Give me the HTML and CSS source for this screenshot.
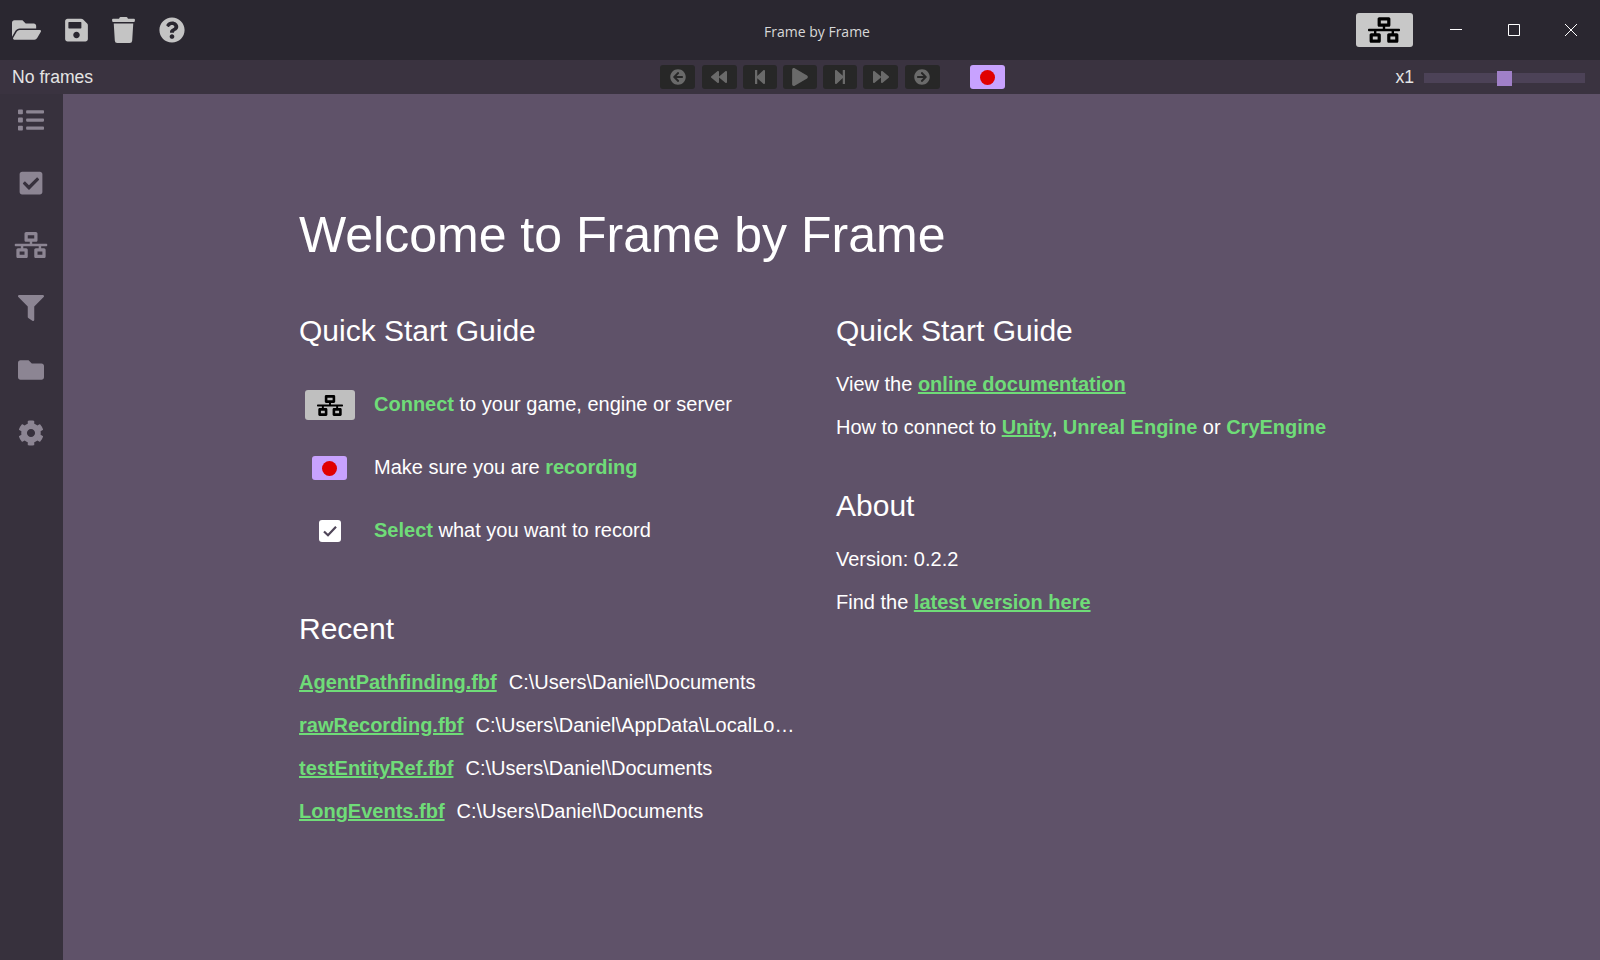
FILE: index.html
```html
<!DOCTYPE html>
<html>
  <head>
    <title>Frame by Frame</title>
    <meta charset="utf-8" />
    <link rel="stylesheet" href="styles.css">
  </head>
  <body>
    <svg class="defs" xmlns="http://www.w3.org/2000/svg">
      <symbol id="i-folder-open" viewBox="0 0 576 512"><path d="M572.694 292.093L500.27 416.248A63.997 63.997 0 0 1 444.989 448H45.025c-18.523 0-30.064-20.093-20.731-36.093l72.424-124.155A64 64 0 0 1 152 256h399.964c18.523 0 30.064 20.093 20.73 36.093zM152 224h328v-48c0-26.51-21.49-48-48-48H272l-64-64H48C21.49 64 0 85.49 0 112v278.046l69.077-118.418C86.214 242.25 117.989 224 152 224z"/></symbol>
      <symbol id="i-save" viewBox="0 0 448 512"><path d="M433.941 129.941l-83.882-83.882A48 48 0 0 0 316.118 32H48C21.49 32 0 53.49 0 80v352c0 26.51 21.49 48 48 48h352c26.51 0 48-21.49 48-48V163.882a48 48 0 0 0-14.059-33.941zM224 416c-35.346 0-64-28.654-64-64 0-35.346 28.654-64 64-64s64 28.654 64 64c0 35.346-28.654 64-64 64zm96-304.52V212c0 6.627-5.373 12-12 12H76c-6.627 0-12-5.373-12-12V108c0-6.627 5.373-12 12-12h228.52c3.183 0 6.235 1.264 8.485 3.515l3.48 3.48A11.996 11.996 0 0 1 320 111.48z"/></symbol>
      <symbol id="i-trash" viewBox="0 0 448 512"><path d="M432 32H312l-9.4-18.7A24 24 0 0 0 281.1 0H166.8a23.72 23.72 0 0 0-21.4 13.3L136 32H16A16 16 0 0 0 0 48v32a16 16 0 0 0 16 16h416a16 16 0 0 0 16-16V48a16 16 0 0 0-16-16zM53.2 467a48 48 0 0 0 47.9 45h245.8a48 48 0 0 0 47.9-45L416 128H32z"/></symbol>
      <symbol id="i-question" viewBox="0 0 512 512"><path d="M504 256c0 136.997-111.043 248-248 248S8 392.997 8 256C8 119.083 119.043 8 256 8s248 111.083 248 248zM262.655 90c-54.497 0-89.255 22.957-116.549 63.758-3.536 5.286-2.353 12.415 2.715 16.258l34.699 26.31c5.205 3.947 12.621 3.008 16.665-2.122 17.864-22.658 30.113-35.797 57.303-35.797 20.429 0 45.698 13.148 45.698 32.958 0 14.976-12.363 22.667-32.534 33.976C247.128 238.528 216 254.941 216 296v4c0 6.627 5.373 12 12 12h56c6.627 0 12-5.373 12-12v-1.333c0-28.462 83.186-29.647 83.186-106.667 0-58.002-60.165-102-116.531-102zM256 338c-25.365 0-46 20.635-46 46 0 25.364 20.635 46 46 46s46-20.636 46-46c0-25.365-20.635-46-46-46z"/></symbol>
      <symbol id="i-network" viewBox="0 0 640 512"><path d="M640 264v-16c0-8.84-7.16-16-16-16H344v-40h72c17.67 0 32-14.33 32-32V32c0-17.67-14.33-32-32-32H224c-17.67 0-32 14.33-32 32v128c0 17.67 14.33 32 32 32h72v40H16c-8.84 0-16 7.16-16 16v16c0 8.84 7.16 16 16 16h104v40H64c-17.67 0-32 14.33-32 32v128c0 17.67 14.33 32 32 32h160c17.67 0 32-14.33 32-32V352c0-17.67-14.33-32-32-32h-56v-40h304v40h-56c-17.67 0-32 14.33-32 32v128c0 17.67 14.33 32 32 32h160c17.67 0 32-14.33 32-32V352c0-17.67-14.33-32-32-32h-56v-40h104c8.84 0 16-7.16 16-16zM256 128V64h128v64H256zm-64 320H96v-64h96v64zm352 0h-96v-64h96v64z"/></symbol>
      <symbol id="i-list" viewBox="0 0 512 512"><path d="M80 368H16a16 16 0 0 0-16 16v64a16 16 0 0 0 16 16h64a16 16 0 0 0 16-16v-64a16 16 0 0 0-16-16zm0-320H16A16 16 0 0 0 0 64v64a16 16 0 0 0 16 16h64a16 16 0 0 0 16-16V64a16 16 0 0 0-16-16zm0 160H16a16 16 0 0 0-16 16v64a16 16 0 0 0 16 16h64a16 16 0 0 0 16-16v-64a16 16 0 0 0-16-16zm416 176H176a16 16 0 0 0-16 16v32a16 16 0 0 0 16 16h320a16 16 0 0 0 16-16v-32a16 16 0 0 0-16-16zm0-320H176a16 16 0 0 0-16 16v32a16 16 0 0 0 16 16h320a16 16 0 0 0 16-16V80a16 16 0 0 0-16-16zm0 160H176a16 16 0 0 0-16 16v32a16 16 0 0 0 16 16h320a16 16 0 0 0 16-16v-32a16 16 0 0 0-16-16z"/></symbol>
      <symbol id="i-check" viewBox="0 0 448 512"><path d="M400 480H48c-26.51 0-48-21.49-48-48V80c0-26.51 21.49-48 48-48h352c26.51 0 48 21.49 48 48v352c0 26.51-21.49 48-48 48zm-204.686-98.059l184-184c6.248-6.248 6.248-16.379 0-22.627l-22.627-22.627c-6.248-6.248-16.379-6.249-22.628 0L184 302.745l-70.059-70.059c-6.248-6.248-16.379-6.248-22.628 0l-22.627 22.627c-6.248 6.248-6.248 16.379 0 22.627l104 104c6.249 6.25 16.379 6.25 22.628.001z"/></symbol>
      <symbol id="i-filter" viewBox="0 0 512 512"><path d="M487.976 0H24.028C2.71 0-8.047 25.866 7.058 40.971L192 225.941V432c0 7.831 3.821 15.17 10.237 19.662l80 55.98C298.02 518.69 320 507.493 320 487.98V225.941l184.947-184.97C520.021 25.896 509.338 0 487.976 0z"/></symbol>
      <symbol id="i-folder" viewBox="0 0 512 512"><path d="M464 128H272l-64-64H48C21.49 64 0 85.49 0 112v288c0 26.51 21.49 48 48 48h416c26.51 0 48-21.49 48-48V176c0-26.51-21.49-48-48-48z"/></symbol>
      <symbol id="i-cog" viewBox="0 0 512 512"><path d="M487.4 315.7l-42.6-24.6c4.3-23.2 4.3-47 0-70.2l42.6-24.6c4.9-2.8 7.1-8.6 5.5-14-11.1-35.6-30-67.8-54.7-94.6-3.8-4.1-10-5.1-14.8-2.3L380.8 110c-17.9-15.4-38.5-27.3-60.8-35.1V25.8c0-5.6-3.9-10.5-9.4-11.7-36.7-8.2-74.3-7.8-109.2 0-5.5 1.2-9.4 6.1-9.4 11.7V75c-22.2 7.9-42.8 19.8-60.8 35.1L88.7 85.5c-4.9-2.8-11-1.9-14.8 2.3-24.7 26.7-43.6 58.9-54.7 94.6-1.7 5.4.6 11.2 5.5 14L67.3 221c-4.3 23.2-4.3 47 0 70.2l-42.6 24.6c-4.9 2.8-7.1 8.6-5.5 14 11.1 35.6 30 67.8 54.7 94.6 3.8 4.1 10 5.1 14.8 2.3l42.6-24.6c17.9 15.4 38.5 27.3 60.8 35.1v49.2c0 5.6 3.9 10.5 9.4 11.7 36.7 8.2 74.3 7.8 109.2 0 5.5-1.2 9.4-6.1 9.4-11.7v-49.2c22.2-7.9 42.8-19.8 60.8-35.1l42.6 24.6c4.9 2.8 11 1.9 14.8-2.3 24.7-26.7 43.6-58.9 54.7-94.6 1.5-5.5-.7-11.3-5.6-14.1zM256 336c-44.1 0-80-35.9-80-80s35.9-80 80-80 80 35.9 80 80-35.9 80-80 80z"/></symbol>
      <symbol id="i-arrow-left" viewBox="0 0 512 512"><path d="M256 504C119 504 8 393 8 256S119 8 256 8s248 111 248 248-111 248-248 248zm28.9-143.6L209.4 288H392c13.3 0 24-10.7 24-24v-16c0-13.3-10.7-24-24-24H209.4l75.5-72.4c9.7-9.3 9.9-24.8.4-34.3l-11-10.9c-9.4-9.4-24.6-9.4-33.9 0L107.7 239c-9.4 9.4-9.4 24.6 0 33.9l132.7 132.7c9.4 9.4 24.6 9.4 33.9 0l11-10.9c9.5-9.5 9.3-25-.4-34.3z"/></symbol>
      <symbol id="i-arrow-right" viewBox="0 0 512 512"><path d="M256 8c137 0 248 111 248 248S393 504 256 504 8 393 8 256 119 8 256 8zm-28.9 143.6l75.5 72.4H120c-13.3 0-24 10.7-24 24v16c0 13.3 10.7 24 24 24h182.6l-75.5 72.4c-9.7 9.3-9.9 24.8-.4 34.3l11 10.9c9.4 9.4 24.6 9.4 33.9 0L404.3 273c9.4-9.4 9.4-24.6 0-33.9L271.6 106.3c-9.4-9.4-24.6-9.4-33.9 0l-11 10.9c-9.5 9.6-9.3 25.1.4 34.4z"/></symbol>
      <symbol id="i-backward" viewBox="0 0 512 512"><path d="M11.5 280.6l192 160c20.6 17.2 52.5 2.8 52.5-24.6V96c0-27.4-31.9-41.8-52.5-24.6l-192 160c-15.3 12.8-15.3 36.4 0 49.2zm256 0l192 160c20.6 17.2 52.5 2.8 52.5-24.6V96c0-27.4-31.9-41.8-52.5-24.6l-192 160c-15.3 12.8-15.3 36.4 0 49.2z"/></symbol>
      <symbol id="i-forward" viewBox="0 0 512 512"><path d="M500.5 231.4l-192-160C287.9 54.3 256 68.6 256 96v320c0 27.4 31.9 41.8 52.5 24.6l192-160c15.3-12.8 15.3-36.4 0-49.2zm-256 0l-192-160C31.9 54.3 0 68.6 0 96v320c0 27.4 31.9 41.8 52.5 24.6l192-160c15.3-12.8 15.3-36.4 0-49.2z"/></symbol>
      <symbol id="i-step-back" viewBox="0 0 448 512"><path d="M64 468V44c0-6.6 5.4-12 12-12h48c6.6 0 12 5.4 12 12v176.4l195.5-181C352.1 22.3 384 36.6 384 64v384c0 27.4-31.9 41.7-52.5 24.6L136 292.7V468c0 6.6-5.4 12-12 12H76c-6.6 0-12-5.4-12-12z"/></symbol>
      <symbol id="i-step-forward" viewBox="0 0 448 512"><path d="M384 44v424c0 6.6-5.4 12-12 12h-48c-6.6 0-12-5.4-12-12V291.6l-195.5 181C95.9 489.7 64 475.4 64 448V64c0-27.4 31.9-41.7 52.5-24.6L312 219.3V44c0-6.6 5.4-12 12-12h48c6.6 0 12 5.4 12 12z"/></symbol>
      <symbol id="i-play" viewBox="0 0 448 512"><path d="M424.4 214.7L72.4 6.6C43.8-10.3 0 6.1 0 47.9V464c0 37.5 40.7 60.1 72.4 41.3l352-208c31.4-18.5 31.5-64.1 0-82.6z"/></symbol>
    </svg>

    <div class="titlebar">
      <div class="tools">
        <svg class="tool w36"><use href="#i-folder-open"/></svg>
        <svg class="tool w28"><use href="#i-save"/></svg>
        <svg class="tool w28"><use href="#i-trash"/></svg>
        <svg class="tool w32"><use href="#i-question"/></svg>
      </div>
      <div class="wintitle">Frame by Frame</div>
      <div class="winright">
        <div class="connect-btn"><svg class="connect-icon"><use href="#i-network"/></svg></div>
        <div class="winbtn">
          <svg width="12" height="12" viewBox="0 0 12 12"><path d="M0 5.5h12" stroke="#fff" fill="none"/></svg>
        </div>
        <div class="winbtn">
          <svg width="12" height="12" viewBox="0 0 12 12"><path d="M.5.5h11v11H.5z" stroke="#fff" fill="none"/></svg>
        </div>
        <div class="winbtn">
          <svg width="12" height="12" viewBox="0 0 12 12"><path d="M0 0l12 12M12 0L0 12" stroke="#fff" fill="none"/></svg>
        </div>
      </div>
    </div>

    <div class="framebar">
      <div class="frames">No frames</div>
      <div class="transport">
        <div class="tbtn"><svg class="ticon s16"><use href="#i-arrow-left"/></svg></div>
        <div class="tbtn"><svg class="ticon s16"><use href="#i-backward"/></svg></div>
        <div class="tbtn thin"><svg class="ticon s16"><use href="#i-step-back"/></svg></div>
        <div class="tbtn thin"><svg class="ticon s18"><use href="#i-play"/></svg></div>
        <div class="tbtn thin"><svg class="ticon s16"><use href="#i-step-forward"/></svg></div>
        <div class="tbtn"><svg class="ticon s16"><use href="#i-forward"/></svg></div>
        <div class="tbtn"><svg class="ticon s16"><use href="#i-arrow-right"/></svg></div>
        <div class="rec rec-bar"><span class="dot"></span></div>
      </div>
      <div class="speed">
        <span>x1</span>
        <div class="track"><div class="thumb"></div></div>
      </div>
    </div>

    <div class="main">
      <div class="sidebar">
        <svg class="side-icon"><use href="#i-list"/></svg>
        <svg class="side-icon"><use href="#i-check"/></svg>
        <svg class="side-icon"><use href="#i-network"/></svg>
        <svg class="side-icon"><use href="#i-filter"/></svg>
        <svg class="side-icon"><use href="#i-folder"/></svg>
        <svg class="side-icon"><use href="#i-cog"/></svg>
      </div>
      <div class="content">
        <h1>Welcome to Frame by Frame</h1>
        <div class="columns">
          <div class="col">
            <h2>Quick Start Guide</h2>
            <div class="steps">
              <div class="step">
                <div class="step-icon"><div class="connect-btn small"><svg class="connect-icon small"><use href="#i-network"/></svg></div></div>
                <div><b>Connect</b> to your game, engine or server</div>
              </div>
              <div class="step">
                <div class="step-icon"><div class="rec"><span class="dot"></span></div></div>
                <div>Make sure you are <b>recording</b></div>
              </div>
              <div class="step">
                <div class="step-icon"><div class="checkbox"><svg width="14" height="12" viewBox="0 0 14 12"><path d="M1 6.5l4 3.8L13 1.7" stroke="#4f4558" stroke-width="2.2" fill="none"/></svg></div></div>
                <div><b>Select</b> what you want to record</div>
              </div>
            </div>
            <h2 class="recent-head">Recent</h2>
            <div class="recent"><a href="#">AgentPathfinding.fbf</a><span>C:\Users\Daniel\Documents</span></div>
            <div class="recent"><a href="#">rawRecording.fbf</a><span>C:\Users\Daniel\AppData\LocalLo…</span></div>
            <div class="recent"><a href="#">testEntityRef.fbf</a><span>C:\Users\Daniel\Documents</span></div>
            <div class="recent"><a href="#">LongEvents.fbf</a><span>C:\Users\Daniel\Documents</span></div>
          </div>
          <div class="col">
            <h2>Quick Start Guide</h2>
            <p class="first">View the <a href="#">online documentation</a></p>
            <p>How to connect to <a href="#">Unity</a>, <b>Unreal Engine</b> or <b>CryEngine</b></p>
            <h2 class="about-head">About</h2>
            <p class="version">Version: 0.2.2</p>
            <p class="latest">Find the <a href="#">latest version here</a></p>
          </div>
        </div>
      </div>
    </div>
  </body>
</html>
```

FILE: styles.css
```css
*{
  margin:0;
  padding:0;
  box-sizing:border-box;
}
html,body{
  height:100%;
  overflow:hidden;
}
body{
  display:flex;
  flex-direction:column;
  font-family:"Liberation Sans",Arial,sans-serif;
  font-size:20px;
  color:#fff;
  background:#5f5269;
}
.defs{
  display:none;
}

/* title bar */
.titlebar{
  height:60px;
  flex:none;
  display:flex;
  align-items:center;
  justify-content:space-between;
  background:#2a2730;
  position:relative;
}
.tools{
  display:flex;
  align-items:center;
  gap:24px;
  padding-left:12px;
}
.tool{
  height:26px;
  fill:#c4c4c4;
}
.w36{width:29px;}
.w28{width:23px;}
.w32{width:26px;}
.wintitle{
  position:absolute;
  left:34px;
  right:0;
  top:22px;
  text-align:center;
  font-family:"Open Sans",sans-serif;
  font-size:14px;
  color:#d8d8d8;
}
.winright{
  display:flex;
  align-items:center;
}
.connect-btn{
  width:57px;
  height:34px;
  margin-right:15px;
  background:#c8c8c8;
  border-radius:3px;
  display:flex;
  align-items:center;
  justify-content:center;
}
.connect-btn.small{
  width:50px;
  height:30px;
  margin:0;
  background:#bfbfbf;
}
.connect-icon{
  width:32px;
  height:26px;
  fill:#000;
}
.connect-icon.small{
  width:26px;
  height:21px;
}
.winbtn{
  width:57.5px;
  height:60px;
  display:flex;
  align-items:center;
  justify-content:center;
}

/* frame bar */
.framebar{
  height:34px;
  flex:none;
  display:flex;
  align-items:center;
  justify-content:space-between;
  padding:0 15px 0 12px;
  background:#3a3340;
  position:relative;
  font-size:17.6px;
  color:#e4e4e4;
}
.transport{
  position:absolute;
  left:660px;
  top:5px;
  display:flex;
  gap:6.5px;
}
.tbtn{
  width:35px;
  height:24px;
  background:#272727;
  border-radius:3px;
  display:flex;
  align-items:center;
  justify-content:center;
}
.tbtn.thin{
  width:33.5px;
}
.ticon{
  fill:#6a6a6a;
}
.s16{width:16px;height:16px;}
.s18{width:18px;height:18px;}
.rec{
  width:35px;
  height:24px;
  background:#c8a2ff;
  border-radius:3px;
  display:flex;
  align-items:center;
  justify-content:center;
}
.rec-bar{
  margin-left:24px;
}
.dot{
  width:15px;
  height:15px;
  border-radius:50%;
  background:#e00000;
}
.speed{
  display:flex;
  align-items:center;
  gap:10px;
}
.track{
  width:161px;
  height:10px;
  margin-top:2px;
  background:#4c4257;
  position:relative;
}
.thumb{
  position:absolute;
  left:73px;
  top:-2px;
  width:15px;
  height:15px;
  background:#a080c8;
}

/* main */
.main{
  flex:1;
  display:flex;
  min-height:0;
}
.sidebar{
  width:63px;
  flex:none;
  background:#37313d;
  display:flex;
  flex-direction:column;
  align-items:center;
  gap:36.6px;
  padding:13px .5px 0 0;
}
.side-icon{
  width:34px;
  height:26px;
  flex:none;
  fill:#8c8593;
}
.content{
  flex:1;
  padding:111px 0 0 236px;
}
h1{
  font-size:50px;
  font-weight:normal;
  line-height:60px;
}
h2{
  font-size:30px;
  font-weight:normal;
  line-height:36px;
}
.columns{
  display:grid;
  grid-template-columns:537px 1fr;
  margin-top:48px;
}
.col{
  min-width:0;
}
a,b{
  color:#6fdc78;
  font-weight:bold;
}
.steps{
  margin-top:42px;
  display:flex;
  flex-direction:column;
  gap:37px;
}
.step{
  display:flex;
  align-items:center;
  height:26px;
}
.step-icon{
  width:75px;
  display:flex;
  justify-content:center;
  padding:2px 14px 0 0;
}
.checkbox{
  width:22px;
  height:22px;
  background:#fff;
  border-radius:3px;
  display:flex;
  align-items:center;
  justify-content:center;
}
.recent-head{
  margin-top:68px;
  margin-bottom:22px;
}
.recent{
  display:flex;
  gap:12px;
  height:43px;
  line-height:26px;
  white-space:nowrap;
}
.recent a{
  flex:none;
}
p{
  line-height:26px;
}
p.first{
  margin-top:22px;
  margin-bottom:17px;
}
.about-head{
  margin-top:48px;
}
.version{
  margin-top:22px;
  margin-bottom:17px;
}
```
